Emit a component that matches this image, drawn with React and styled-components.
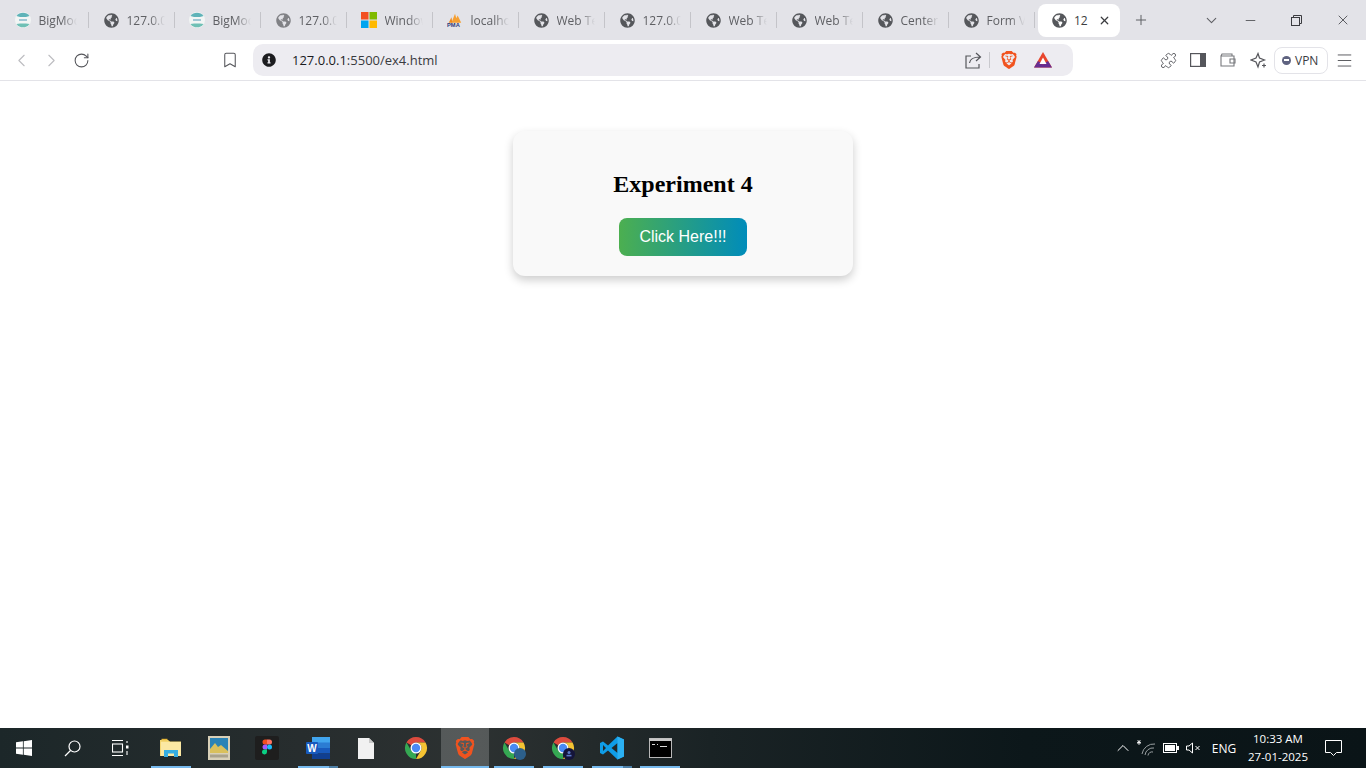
import React from "react";
import styled, { createGlobalStyle, css } from "styled-components";
import { FaGlobeAmericas, FaInfoCircle } from "react-icons/fa";
import { SiBrave } from "react-icons/si";
import {
  ChevronLeft,
  ChevronRight,
  ChevronDown,
  ChevronUp,
  RotateCw,
  Bookmark,
  Plus,
  Minus,
  X,
  Menu,
  Puzzle,
} from "lucide-react";

const GlobalStyle = createGlobalStyle`
  html, body {
    margin: 0;
    padding: 0;
    height: 100%;
    overflow: hidden;
    background: #fff;
  }
`;

const BigMocIcon = () => (
  <svg width="16" height="16" viewBox="0 0 16 16">
    <circle cx="8" cy="8" r="8" fill="#f2f5f4" />
    <path d="M1.5 4A8 8 0 0 1 14.5 4L11 5H5Z" fill="#5fb3b8" />
    <path d="M1.5 12A8 8 0 0 0 14.5 12L11 11.5H5Z" fill="#6fc0b5" />
    <path d="M4 8h8" stroke="#4d9ab5" strokeWidth="1" />
  </svg>
);

const MsIcon = () => (
  <svg width="16" height="16" viewBox="0 0 16 16">
    <rect width="7.5" height="7.5" fill="#f25022" />
    <rect x="8.5" width="7.5" height="7.5" fill="#7fba00" />
    <rect y="8.5" width="7.5" height="7.5" fill="#00a4ef" />
    <rect x="8.5" y="8.5" width="7.5" height="7.5" fill="#ffb900" />
  </svg>
);

const PmaIcon = () => (
  <svg width="18" height="16" viewBox="0 0 18 16">
    <path d="M5 11 9 1l1.5 5L12 3l4 8Z" fill="#f5a033" />
    <path d="M2 11 5 5l1 6Z" fill="#f08a1d" />
    <text x="0" y="15.5" fontFamily="Liberation Sans, sans-serif" fontSize="6.5" fontWeight="700" fill="#2f3a7a">
      PMA
    </text>
  </svg>
);

const tabs = [
  { icon: <BigMocIcon />, label: "BigMock" },
  { label: "127.0.0.1" },
  { icon: <BigMocIcon />, label: "BigMock" },
  { label: "127.0.0.1", muted: true },
  { icon: <MsIcon />, label: "Windows" },
  { icon: <PmaIcon />, label: "localhost" },
  { label: "Web Tech" },
  { label: "127.0.0.1" },
  { label: "Web Tech" },
  { label: "Web Tech" },
  { label: "Center" },
  { label: "Form Val" },
];

const Page = styled.div`
  display: flex;
  flex-direction: column;
  height: 100vh;
  font-family: "Open Sans", "Liberation Sans", sans-serif;
`;

const TabStrip = styled.div`
  display: flex;
  align-items: center;
  height: 40px;
  background: #e3e3e8;
  flex-shrink: 0;
`;

const Tab = styled.div`
  position: relative;
  display: flex;
  align-items: center;
  flex-shrink: 0;
  width: 86px;
  height: 40px;
  padding-left: 15px;
  box-sizing: border-box;
  color: #5f6064;

  &:first-child {
    width: 88px;
  }

  &::after {
    content: "";
    position: absolute;
    right: -1px;
    top: 12px;
    height: 16px;
    width: 1px;
    background: #c4c4c9;
  }
`;

const Favicon = styled.span`
  display: flex;
  justify-content: center;
  flex-shrink: 0;
  width: 16px;
  font-size: 15px;
  color: ${(p) => (p.$muted ? "#808185" : "#55575b")};
`;

const TabTitle = styled.span`
  width: 38px;
  margin-left: 7.5px;
  font-size: 12px;
  white-space: nowrap;
  overflow: hidden;
  mask-image: linear-gradient(90deg, #000 60%, transparent 100%);
`;

const ActiveTab = styled.div`
  display: flex;
  align-items: center;
  flex-shrink: 0;
  width: 82px;
  height: 33px;
  margin-left: 4px;
  margin-top: 1px;
  padding-left: 13px;
  box-sizing: border-box;
  background: #fff;
  border-radius: 8px;
  color: #3c3d41;
`;

const ActiveTitle = styled.span`
  margin-left: 7px;
  font-size: 12px;
  flex: 1;
`;

const StripButton = styled.span`
  display: flex;
  align-items: center;
  justify-content: center;
  width: ${(p) => p.$w || 46}px;
  margin-left: ${(p) => p.$ml || 0}px;
  color: ${(p) => p.$color || "#3a3b3f"};
`;

const Toolbar = styled.div`
  display: flex;
  align-items: center;
  height: 40px;
  padding-left: 6px;
  background: #fff;
  border-bottom: 1px solid #e3e3e8;
  flex-shrink: 0;
`;

const ToolButton = styled.span`
  display: flex;
  align-items: center;
  justify-content: center;
  width: 30px;
  height: 30px;
  margin-left: ${(p) => p.$ml || 0}px;
  margin-right: ${(p) => p.$mr || 0}px;
  color: ${(p) => p.$color || "#55565b"};
`;

const AddressBar = styled.div`
  display: flex;
  align-items: center;
  width: 820px;
  height: 32px;
  margin-left: 8px;
  padding-left: 9px;
  box-sizing: border-box;
  background: #edecf1;
  border-radius: 10px;
`;

const Url = styled.span`
  margin-left: 16px;
  font-size: 13px;
  color: #3a3b3f;
  flex: 1;

  b {
    font-weight: 400;
    color: #1a1b1e;
  }
`;

const Divider = styled.span`
  width: 1px;
  height: 16px;
  margin-left: 1px;
  background: #c9c9ce;
`;

const VpnPill = styled.div`
  display: flex;
  align-items: center;
  gap: 4px;
  width: 54px;
  height: 27px;
  margin-left: 1px;
  padding-left: 7px;
  box-sizing: border-box;
  border: 1px solid #e3e3e8;
  border-radius: 8px;
  font-size: 12px;
  color: #3a3b3f;
`;

const VpnDot = styled.span`
  display: flex;
  align-items: center;
  justify-content: center;
  width: 9px;
  height: 9px;
  border-radius: 50%;
  background: #5f6380;

  &::after {
    content: "";
    width: 5px;
    height: 1.5px;
    background: #fff;
  }
`;

const Main = styled.main`
  flex: 1;
  display: flex;
  justify-content: center;
  align-items: flex-start;
  padding-top: 50px;
  background: #fff;
`;

const Card = styled.div`
  width: 340px;
  padding: 20px;
  box-sizing: border-box;
  text-align: center;
  background: #f9f9f9;
  border-radius: 12px;
  box-shadow: 0 4px 10px rgba(0, 0, 0, 0.2);
`;

const Heading = styled.h2`
  margin: 20px 0;
  font-family: "Liberation Serif", serif;
  font-size: 24px;
  font-weight: 700;
  color: #000;
`;

const ClickButton = styled.button`
  display: block;
  width: 128px;
  height: 38px;
  margin: 0 auto;
  padding: 0;
  border: none;
  border-radius: 8px;
  background: linear-gradient(90deg, #4caf50, #008cba);
  color: #fff;
  font-family: "Liberation Sans", sans-serif;
  font-size: 16px;
  cursor: pointer;
`;

const Taskbar = styled.div`
  display: flex;
  align-items: stretch;
  height: 40px;
  flex-shrink: 0;
  color: #fff;
  background: linear-gradient(90deg, #1c2729 0%, #272d2e 22%, #2c3131 35%, #1a2325 52%, #0c171a 75%, #0a1417 100%);
`;

const TaskItem = styled.div`
  position: relative;
  display: flex;
  align-items: center;
  justify-content: center;
  width: 48px;
  margin-left: ${(p) => p.$ml || 0}px;

  ${(p) =>
    p.$active &&
    css`
      background: rgba(255, 255, 255, 0.2);
    `}

  ${(p) =>
    p.$open &&
    css`
      &::after {
        content: "";
        position: absolute;
        bottom: 0;
        left: ${p.$active ? 0 : 4}px;
        right: ${p.$active ? 0 : 4}px;
        height: 2px;
        background: ${p.$stack
          ? "linear-gradient(90deg, #76b9ed 77%, #4d7fa6 77%)"
          : "#76b9ed"};
      }
    `}
`;

const Tray = styled.div`
  display: flex;
  align-items: center;
  margin-left: auto;
  height: 100%;
`;

const TrayIcon = styled.span`
  display: flex;
  align-items: center;
  justify-content: center;
  width: ${(p) => p.$w || 24}px;
  color: #fff;
`;

const Lang = styled.span`
  width: 32px;
  margin-left: 5px;
  text-align: center;
  font-size: 12px;
`;

const Clock = styled.div`
  width: 76px;
  text-align: center;
  font-size: 11.5px;
  line-height: 18px;
`;

const Notify = styled.span`
  display: flex;
  align-items: center;
  justify-content: center;
  width: 34px;
  margin-right: 16px;
`;

const WinLogo = () => (
  <svg width="16" height="16" viewBox="0 0 16 16" fill="#fff">
    <path d="M0 2.3 6.9 1.3V7.6H0ZM7.7 1.2 16 0V7.6H7.7ZM0 8.4H6.9V14.7L0 13.7ZM7.7 8.4H16V16L7.7 14.8Z" />
  </svg>
);

const SearchIcon = () => (
  <svg width="17" height="17" viewBox="0 0 17 17" fill="none" stroke="#fff" strokeWidth="1.2">
    <circle cx="10.5" cy="6.5" r="5.5" />
    <path d="M6.5 10.5 1 16" />
  </svg>
);

const TaskViewIcon = () => (
  <svg width="17" height="16" viewBox="0 0 17 16" fill="none" stroke="#fff" strokeWidth="1.1">
    <path d="M0 .5h11M0 15.5h11" />
    <rect x=".5" y="4" width="10" height="8" />
    <rect x="14" y="5.5" width="2.5" height="3" fill="#fff" stroke="none" />
    <path d="M15 1v2M15 11v4" />
  </svg>
);

const ExplorerIcon = () => (
  <svg width="22" height="20" viewBox="0 0 22 20">
    <path d="M0 2h8l2 1.5h11V18H0Z" fill="#f4d774" />
    <path d="M1 4h20V18H1Z" fill="#fbe8a3" />
    <rect x="1.5" y=".8" width="6" height="1.5" fill="#e8b93a" />
    <path d="M4 19v-7h14v7h-4v-3.5h-6V19Z" fill="#37aee2" />
  </svg>
);

const PhotosIcon = () => (
  <svg width="22" height="24" viewBox="0 0 22 24">
    <rect width="22" height="24" fill="#d8d0b8" />
    <rect x="2" y="2" width="18" height="15" fill="#2a83b6" />
    <path d="M2 13 7 7l3 4 3-2 7 6v2H2Z" fill="#d9c05c" />
    <rect x="2" y="18.5" width="18" height="3" fill="#a9a28c" />
  </svg>
);

const FigmaIcon = () => (
  <svg width="24" height="24" viewBox="0 0 24 24">
    <rect width="24" height="24" rx="2" fill="#1e1e1e" />
    <path d="M7.5 3.5h4.5v5H10A2.5 2.5 0 0 1 10 3.5Z" fill="#f24e1e" />
    <path d="M12 3.5h2.5a2.5 2.5 0 0 1 0 5H12Z" fill="#ff7262" />
    <path d="M10 8.5h2v5h-2a2.5 2.5 0 0 1 0-5Z" fill="#a259ff" />
    <circle cx="14.5" cy="11" r="2.5" fill="#1abcfe" />
    <path d="M10 13.5h2V16a2.5 2.5 0 1 1-2-2.5Z" fill="#0acf83" />
  </svg>
);

const WordIcon = () => (
  <svg width="24" height="22" viewBox="0 0 24 22">
    <rect x="6" width="18" height="6" fill="#41a5ee" />
    <rect x="6" y="5.5" width="18" height="5.5" fill="#2b7cd3" />
    <rect x="6" y="11" width="18" height="5.5" fill="#185abd" />
    <rect x="6" y="16.5" width="18" height="5.5" fill="#103f91" />
    <rect y="5" width="12" height="12" rx="1" fill="#185abd" />
    <text x="6" y="15" textAnchor="middle" fontFamily="Liberation Sans, sans-serif" fontWeight="700" fontSize="10" fill="#fff">
      W
    </text>
  </svg>
);

const FileIcon = () => (
  <svg width="16" height="21" viewBox="0 0 16 21">
    <path d="M0 0h11l5 5v16H0Z" fill="#f1f1f1" />
    <path d="M11 0l5 5h-5Z" fill="#c9c9c9" />
  </svg>
);

const ChromeIcon = ({ badge }) => (
  <svg width="24" height="24" viewBox="0 0 24 24">
    <path d="M12 1a11 11 0 0 1 9.53 5.5H12a5.5 5.5 0 0 0-4.76 2.75L2.47 6.5A11 11 0 0 1 12 1z" fill="#dd4b3e" />
    <path d="M21.53 6.5A11 11 0 0 1 12 23l4.76-8.25A5.5 5.5 0 0 0 12 6.5z" fill="#f5c332" />
    <path d="M2.47 6.5l4.77 8.25a5.5 5.5 0 0 0 4.76 2.75L12 23A11 11 0 0 1 2.47 6.5z" fill="#35a853" />
    <circle cx="12" cy="12" r="5.5" fill="#fff" />
    <circle cx="12" cy="12" r="4.2" fill="#4a8af4" />
    {badge === "photo" && <circle cx="18" cy="18" r="6" fill="#2c5f8a" />}
    {badge === "dark" && (
      <>
        <circle cx="18" cy="18" r="6" fill="#14143a" />
        <circle cx="18" cy="16.5" r="1.5" fill="#5a78c8" />
        <rect x="15.5" y="18.8" width="5" height="1.6" fill="#5a78c8" />
      </>
    )}
  </svg>
);

const VsCodeIcon = () => (
  <svg width="24" height="24" viewBox="0 0 24 24">
    <path d="M17.5 0.5 24 3.5V20.5L17.5 23.5 8 14.5 3 18.5 0 17V7L3 5.5 8 9.5ZM17.5 7 11.5 12 17.5 17ZM3 9V15L6 12Z" fill="#0f9de8" />
    <path d="M17.5 0.5 24 3.5V20.5L17.5 23.5Z" fill="#2bb0f2" />
  </svg>
);

const CmdIcon = () => (
  <svg width="23" height="20" viewBox="0 0 23 20">
    <rect x=".5" y=".5" width="22" height="19" fill="#000" stroke="#b8b8b8" strokeWidth="1" />
    <rect x=".5" y=".5" width="22" height="2.5" fill="#c8c8c8" />
    <path d="M3 6.5H6M8 6.5H9M11 8.5h7" stroke="#d8d8d8" strokeWidth="1.2" />
  </svg>
);

const WifiIcon = () => (
  <svg width="20" height="18" viewBox="0 0 20 18" fill="none" stroke="#9aa0a2" strokeWidth="1">
    <path d="M5 15A12 12 0 0 1 18 5M8 16A8 8 0 0 1 17 9M11 16.5A4 4 0 0 1 16 13" />
    <path d="M2 1v5M0 3.5h4M.5 1.5l3 3.5M3.5 1.5l-3 3.5" stroke="#fff" strokeWidth=".8" />
  </svg>
);

const BatteryIcon = () => (
  <svg width="16" height="10" viewBox="0 0 16 10">
    <rect x=".5" y=".5" width="13" height="9" fill="none" stroke="#fff" />
    <rect x="2" y="2" width="10" height="6" fill="#fff" />
    <rect x="14" y="3" width="2" height="4" fill="#fff" />
  </svg>
);

const MuteIcon = () => (
  <svg width="15" height="12" viewBox="0 0 15 12" fill="none" stroke="#fff" strokeWidth="1">
    <path d="M.5 4v4h2.5L6.5 11V1L3 4Z" />
    <path d="M9.5 4l4 4M13.5 4l-4 4" />
  </svg>
);

const NotifyIcon = () => (
  <svg width="17" height="16" viewBox="0 0 17 16" fill="none" stroke="#fff" strokeWidth="1">
    <path d="M.5.5h16v12h-5l-3 3-3-3h-5Z" />
  </svg>
);

const ShareIcon = () => (
  <svg width="17" height="17" viewBox="0 0 17 17" fill="none" stroke="#55565b" strokeWidth="1.2">
    <path d="M6 4H1v12h13v-4" />
    <path d="M4.5 11C5 7 8 5 15 5M11 1l4.5 4L11 9" />
  </svg>
);

const BatIcon = () => (
  <svg width="18" height="16" viewBox="0 0 18 16">
    <path d="M9 0 18 15.5H0Z" fill="#e8452c" />
    <path d="M0 15.5 4 9l5 3.5 5-3.5 4 6.5Z" fill="#662d91" />
    <path d="M9 5.5 12.5 12h-7Z" fill="#fff" />
  </svg>
);

const SidebarIcon = () => (
  <svg width="16" height="14" viewBox="0 0 16 14">
    <rect x=".6" y=".6" width="14.8" height="12.8" fill="none" stroke="#55565b" strokeWidth="1.2" />
    <rect x="10" y="1" width="5.5" height="12" fill="#55565b" />
  </svg>
);

const WalletIcon = () => (
  <svg width="16" height="14" viewBox="0 0 16 14" fill="none" stroke="#77787c" strokeWidth="1.1">
    <path d="M1 3h13v10H1ZM1 3l1-2h10v2" />
    <path d="M15 6h-5v4h5Z" />
  </svg>
);

const SparkIcon = () => (
  <svg width="17" height="17" viewBox="0 0 17 17" fill="none" stroke="#55565b" strokeWidth="1.2">
    <path d="M8 1.5 9.5 6 14.5 8 9.5 10 8 15 6 10 1 8 6 6Z" />
    <path d="M14 11.5v4M12 13.5h4" />
  </svg>
);

export default function App() {
  return (
    <Page>
      <GlobalStyle />
      <TabStrip>
        {tabs.map((tab, i) => (
          <Tab key={i}>
            <Favicon $muted={tab.muted}>{tab.icon || <FaGlobeAmericas />}</Favicon>
            <TabTitle>{tab.label}</TabTitle>
          </Tab>
        ))}
        <ActiveTab>
          <Favicon>
            <FaGlobeAmericas />
          </Favicon>
          <ActiveTitle>12</ActiveTitle>
          <StripButton $w={32}>
            <X size={13} strokeWidth={2.2} />
          </StripButton>
        </ActiveTab>
        <StripButton $w={20} $ml={11} $color="#5f6064">
          <Plus size={16} strokeWidth={1.5} />
        </StripButton>
        <StripButton $w={24} $ml={48} $color="#5f6064">
          <ChevronDown size={17} strokeWidth={1.5} />
        </StripButton>
        <StripButton $ml={4}>
          <Minus size={15} strokeWidth={1.2} />
        </StripButton>
        <StripButton>
          <svg width="11" height="11" viewBox="0 0 11 11" fill="none" stroke="#3a3b3f">
            <rect x=".5" y="2.5" width="8" height="8" />
            <path d="M2.5 2.5V.5h8v8h-2" />
          </svg>
        </StripButton>
        <StripButton $ml={1}>
          <X size={16} strokeWidth={1.2} />
        </StripButton>
      </TabStrip>

      <Toolbar>
        <ToolButton $color="#bcbcc0">
          <ChevronLeft size={21} strokeWidth={1.3} />
        </ToolButton>
        <ToolButton $color="#bcbcc0">
          <ChevronRight size={21} strokeWidth={1.3} />
        </ToolButton>
        <ToolButton>
          <RotateCw size={17} strokeWidth={1.5} />
        </ToolButton>
        <ToolButton $ml={119}>
          <Bookmark size={18} strokeWidth={1.4} />
        </ToolButton>
        <AddressBar>
          <FaInfoCircle size={14} color="#1c1c1f" />
          <Url>
            <b>127.0.0.1</b>:5500/ex4.html
          </Url>
          <ToolButton>
            <ShareIcon />
          </ToolButton>
          <Divider />
          <ToolButton $ml={4}>
            <SiBrave size={18} color="#f1531f" />
          </ToolButton>
          <ToolButton $ml={4} $mr={15}>
            <BatIcon />
          </ToolButton>
        </AddressBar>
        <ToolButton $ml={80}>
          <Puzzle size={17} strokeWidth={1.3} />
        </ToolButton>
        <ToolButton>
          <SidebarIcon />
        </ToolButton>
        <ToolButton>
          <WalletIcon />
        </ToolButton>
        <ToolButton>
          <SparkIcon />
        </ToolButton>
        <VpnPill>
          <VpnDot />
          VPN
        </VpnPill>
        <ToolButton $ml={1}>
          <Menu size={19} strokeWidth={1.2} />
        </ToolButton>
      </Toolbar>

      <Main>
        <Card>
          <Heading>Experiment 4</Heading>
          <ClickButton>Click Here!!!</ClickButton>
        </Card>
      </Main>

      <Taskbar>
        <TaskItem>
          <WinLogo />
        </TaskItem>
        <TaskItem>
          <SearchIcon />
        </TaskItem>
        <TaskItem>
          <TaskViewIcon />
        </TaskItem>
        <TaskItem $ml={3} $open>
          <ExplorerIcon />
        </TaskItem>
        <TaskItem>
          <PhotosIcon />
        </TaskItem>
        <TaskItem>
          <FigmaIcon />
        </TaskItem>
        <TaskItem $ml={3} $open $stack>
          <WordIcon />
        </TaskItem>
        <TaskItem>
          <FileIcon />
        </TaskItem>
        <TaskItem $ml={2}>
          <ChromeIcon />
        </TaskItem>
        <TaskItem $ml={1} $open $active>
          <SiBrave size={22} color="#f1531f" />
        </TaskItem>
        <TaskItem $ml={1} $open>
          <ChromeIcon badge="photo" />
        </TaskItem>
        <TaskItem $ml={1} $open>
          <ChromeIcon badge="dark" />
        </TaskItem>
        <TaskItem $ml={1} $open $stack>
          <VsCodeIcon />
        </TaskItem>
        <TaskItem $open>
          <CmdIcon />
        </TaskItem>
        <Tray>
          <TrayIcon>
            <ChevronUp size={20} strokeWidth={1.2} />
          </TrayIcon>
          <TrayIcon>
            <WifiIcon />
          </TrayIcon>
          <TrayIcon>
            <BatteryIcon />
          </TrayIcon>
          <TrayIcon $w={20}>
            <MuteIcon />
          </TrayIcon>
          <Lang>ENG</Lang>
          <Clock>
            10:33 AM
            <br />
            27-01-2025
          </Clock>
          <Notify>
            <NotifyIcon />
          </Notify>
        </Tray>
      </Taskbar>
    </Page>
  );
}
